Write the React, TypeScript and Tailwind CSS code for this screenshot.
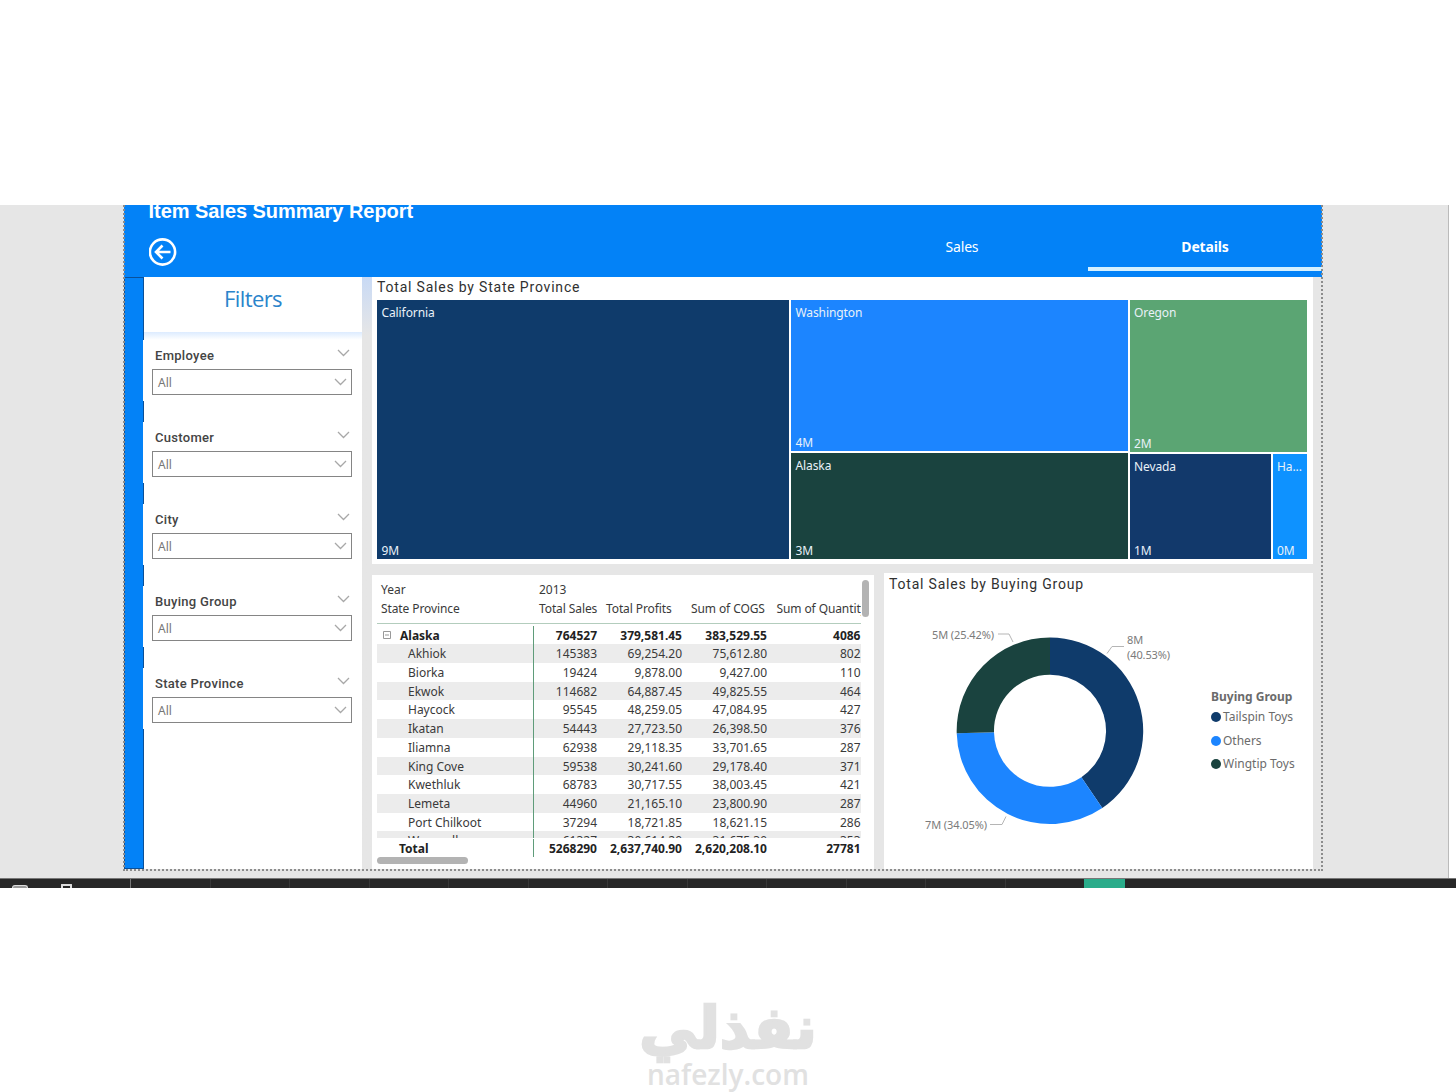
import React from 'react'

const slicers = ["Employee", "Customer", "City", "Buying Group", "State Province"]

const rows = [
  { name: "Akhiok", sales: "145383", profit: "69,254.20", cogs: "75,612.80", qty: "802" },
  { name: "Biorka", sales: "19424", profit: "9,878.00", cogs: "9,427.00", qty: "110" },
  { name: "Ekwok", sales: "114682", profit: "64,887.45", cogs: "49,825.55", qty: "464" },
  { name: "Haycock", sales: "95545", profit: "48,259.05", cogs: "47,084.95", qty: "427" },
  { name: "Ikatan", sales: "54443", profit: "27,723.50", cogs: "26,398.50", qty: "376" },
  { name: "Iliamna", sales: "62938", profit: "29,118.35", cogs: "33,701.65", qty: "287" },
  { name: "King Cove", sales: "59538", profit: "30,241.60", cogs: "29,178.40", qty: "371" },
  { name: "Kwethluk", sales: "68783", profit: "30,717.55", cogs: "38,003.45", qty: "421" },
  { name: "Lemeta", sales: "44960", profit: "21,165.10", cogs: "23,800.90", qty: "287" },
  { name: "Port Chilkoot", sales: "37294", profit: "18,721.85", cogs: "18,621.15", qty: "286" },
  { name: "Wrangell", sales: "61327", profit: "30,614.20", cogs: "31,675.30", qty: "353" },
]

const legend = [
  { name: "Tailspin Toys", dot: "bg-[#0f3b6b]" },
  { name: "Others", dot: "bg-[#1c85ff]" },
  { name: "Wingtip Toys", dot: "bg-[#1a433f]" },
]

function Chevron() {
  return (
    <svg width="13" height="8" viewBox="0 0 13 8" fill="none" stroke="#a8a8a8" strokeWidth="1.3">
      <path d="M1 1l5.5 5.5L12 1" />
    </svg>
  )
}

function Header() {
  return (
    <div className="flex h-[72px] shrink-0 justify-between overflow-hidden bg-[#0382f7] text-white">
      <div className="-mt-[7px] pl-[24.5px]">
        <h1 className="h-[26px] whitespace-nowrap font-['Liberation_Sans'] text-[20px] font-bold leading-[26px] tracking-[-0.04px]">Item Sales Summary Report</h1>
        <svg className="mt-[13px]" width="29" height="29" viewBox="0 0 29 29" fill="none" stroke="white" strokeWidth="2.6">
          <circle cx="13.5" cy="15" r="12.6" />
          <path d="M21.500 15H7M13.500 8.500L7 15l6.500 6.500" />
        </svg>
      </div>
      <div className="flex text-[14px] leading-[20px]">
        <div className="w-[252px] pt-[32px] text-center tracking-[-0.2px]">Sales</div>
        <div className="w-[234px] pt-[32px]">
          <div className="text-center font-bold tracking-[-0.15px]">Details</div>
          <div className="mt-[9.5px] h-[4.5px] bg-[#d6f1ff]"></div>
        </div>
      </div>
    </div>
  )
}

function Filters() {
  return (
    <div className="w-[218px] bg-white">
      <div className="h-[55px] pt-[6px] text-center font-['Open_Sans'] text-[22px] leading-[30px] tracking-[-0.6px] text-[#2a84cb]">Filters</div>
      <div className="h-[8px] bg-gradient-to-b from-[#dcebff] to-white"></div>
      {slicers.map((name) => (
        <div key={name} className="h-[82.1px]">
          <div className="-ml-px h-[61px] bg-white pl-[9px] pr-[10px]">
            <div className="flex h-[28.5px] justify-between pl-[3px] pr-[2px]">
              <div className="pt-[6.5px] font-['Roboto'] text-[13px] font-medium leading-[18px] tracking-[0.3px] text-[#444]">{name}</div>
              <div className="pt-[9px]"><Chevron /></div>
            </div>
            <div className="flex h-[26px] items-center justify-between border-[1.5px] border-[#858585] pl-[5px] pr-[4px] text-[12px] text-[#777]">
              <span className="pt-[2px]">All</span>
              <Chevron />
            </div>
          </div>
        </div>
      ))}
    </div>
  )
}

function Tile(props: any) {
  return (
    <div className={`flex flex-col justify-between overflow-hidden whitespace-nowrap pl-[4.500px] text-[12px] leading-[16px] text-[#e9f1f8] ${props.className}`}>
      <div className="pt-[5px] tracking-[-0.1px]">{props.name}</div>
      <div>{props.value}</div>
    </div>
  )
}

function Treemap() {
  return (
    <div className="h-[287px] bg-white pl-[5px]">
      <h3 className="h-[23px] font-['Roboto'] text-[14px] leading-[20px] tracking-[0.8px] text-[#303030]">Total Sales by State Province</h3>
      <div className="flex h-[259px] gap-[2px]">
        <Tile name="California" value="9M" className="w-[412px] bg-[#0f3b6b]" />
        <div className="flex w-[336.5px] flex-col gap-[2.5px]">
          <Tile name="Washington" value="4M" className="h-[150.5px] bg-[#1c85ff]" />
          <Tile name="Alaska" value="3M" className="h-[106px] bg-[#1a433f]" />
        </div>
        <div className="flex w-[177.5px] flex-col gap-[2px]">
          <Tile name="Oregon" value="2M" className="h-[152px] bg-[#5ba573]" />
          <div className="flex h-[105px] gap-[2px]">
            <Tile name="Nevada" value="1M" className="w-[141px] bg-[#12396b]" />
            <Tile name="Ha..." value="0M" className="w-[34.5px] bg-[#0e92ff]" />
          </div>
        </div>
      </div>
    </div>
  )
}

function Row(props: any) {
  return (
    <div className={`flex shrink-0 whitespace-nowrap leading-[19px] ${props.className}`}>
      <div className="w-[157px] border-r border-[#5f9c7a]">{props.children}</div>
      <div className="w-[63px] text-right">{props.sales}</div>
      <div className="w-[85px] text-right">{props.profit}</div>
      <div className="w-[85px] text-right">{props.cogs}</div>
      <div className="w-[93.5px] text-right">{props.qty}</div>
    </div>
  )
}

function Matrix() {
  return (
    <div className="relative w-[502px] bg-white pl-[5px] pt-[5px] text-[12px] text-[#3a3a3a]">
      <div className="w-[483.5px] overflow-hidden">
        <div className="flex h-[19px] pl-[4px] leading-[19px]">
          <div className="w-[158px]">Year</div>
          <div>2013</div>
        </div>
        <div className="flex h-[25px] whitespace-nowrap border-b border-[#b3cdbd] pl-[4px] leading-[19px] tracking-[-0.1px]">
          <div className="w-[158px] shrink-0">State Province</div>
          <div className="w-[67px] shrink-0">Total Sales</div>
          <div className="w-[85px] shrink-0">Total Profits</div>
          <div className="w-[85.5px] shrink-0">Sum of COGS</div>
          <div>Sum of Quantity</div>
        </div>
        <div className="flex h-[213.5px] flex-col overflow-hidden">
          <Row className="h-[20.3px] pt-[1.5px] font-bold text-[#222]" sales="764527" profit="379,581.45" cogs="383,529.55" qty="4086">
            <div className="flex items-center gap-[9px] pl-[6px]">
              <svg width="8" height="8" viewBox="0 0 8 8" fill="none" stroke="#999"><path d="M.5.5h7v7h-7zM2 4h4" /></svg>
              Alaska
            </div>
          </Row>
          {rows.map((val, index) => (
            <Row key={val.name} className={index % 2 == 0 ? "h-[18.72px] bg-[#ececec]" : "h-[18.72px]"} sales={val.sales} profit={val.profit} cogs={val.cogs} qty={val.qty}>
              <div className="pl-[31px]">{val.name}</div>
            </Row>
          ))}
        </div>
        <Row className="h-[19px] pt-px font-bold text-[#222]" sales="5268290" profit="2,637,740.90" cogs="2,620,208.10" qty="27781">
          <div className="pl-[22px]">Total</div>
        </Row>
      </div>
      <div className="h-[7px] w-[91px] rounded-full bg-[#b3b3b3]"></div>
      <div className="absolute right-[5px] top-[5px] h-[37px] w-[7px] rounded-full bg-[#b3b3b3]"></div>
    </div>
  )
}

function Donut() {
  return (
    <div className="w-[429px] bg-white">
      <h3 className="h-[20px] pl-[5px] pt-px font-['Roboto'] text-[14px] leading-[20px] tracking-[0.8px] text-[#303030]">Total Sales by Buying Group</h3>
      <div className="flex">
        <svg width="320" height="272" viewBox="884 593 320 272" fontSize="11" fill="#7b7b7b">
          <path fill="#0f3b6b" d="M1050 637.5A93.3 93.3 0 0 1 1102.3 808L1081.4 777.2A56 56 0 0 0 1050 674.8Z" />
          <path fill="#1c85ff" d="M1102.3 808A93.3 93.3 0 0 1 956.7 733.3L994 732.3A56 56 0 0 0 1081.4 777.2Z" />
          <path fill="#1a433f" d="M956.7 733.3A93.3 93.3 0 0 1 1050 637.5V674.8A56 56 0 0 0 994 732.3Z" />
          <g fill="none" stroke="#b5b5b5">
            <path d="M998 634h11l4 8M1124 646.500h-12l-5 7M990 824.500h12l4-8" />
          </g>
          <text x="932" y="639" letterSpacing="-0.1">5M (25.42%)</text>
          <text x="1127" y="643.500">8M</text>
          <text x="1127" y="658.500" letterSpacing="-0.1">(40.53%)</text>
          <text x="925" y="829" letterSpacing="-0.1">7M (34.05%)</text>
        </svg>
        <div className="pl-[7px] pt-[96px] text-[12px] text-[#6b6b6b]">
          <div className="h-[16px] font-bold leading-[16px]">Buying Group</div>
          {legend.map((item) => (
            <div key={item.name} className="flex h-[23.7px] items-center gap-[2px] whitespace-nowrap">
              <span className={`size-[10px] rounded-full ${item.dot}`}></span>
              {item.name}
            </div>
          ))}
        </div>
      </div>
    </div>
  )
}

function Taskbar() {
  return (
    <div className="flex h-[9.5px] items-end overflow-hidden border-t border-[#777] bg-[#272727]">
      <div className="flex h-full w-[131px] shrink-0 items-end border-r border-[#777]">
        <div className="ml-[12px] h-[3px] w-[16px] rounded-t-sm border border-b-0 border-[#ddd] bg-[#999]"></div>
        <div className="ml-[33px] h-[4px] w-[11px] rounded-t-[1px] border-2 border-b-0 border-[#ddd]"></div>
      </div>
      {[1, 2, 3, 4, 5, 6, 7, 8, 9, 10, 11].map((n) => (
        <div key={n} className="h-full w-[79.5px] shrink-0 border-r border-[#383838]"></div>
      ))}
      <div className="ml-[78.5px] h-full w-[41px] shrink-0 bg-[#2aac8a]"></div>
    </div>
  )
}

function App() {
  return (
    <div className="h-[1092px] w-[1456px] overflow-hidden bg-white pt-[205px] font-['Noto_Sans',sans-serif]">
      <div className="h-[673px] w-[1449px] border-r border-[#bbb] bg-[#e6e6e6] pl-[123px]">
        <div className="relative flex h-[666px] w-[1200px] flex-col pl-px pr-px">
          <Header />
          <div className="flex h-[592px]">
            <div className="w-[20px] border border-[#0a5099] bg-[#0382f7]"></div>
            <Filters />
            <div className="w-[10px] bg-gradient-to-b from-[#c9daf5] to-[#e6e6e6] to-10%"></div>
            <div className="w-[941px]">
              <Treemap />
              <div className="flex h-[305px] justify-between">
                <div className="flex pt-[11px]"><Matrix /></div>
                <div className="flex pt-[9px]"><Donut /></div>
              </div>
            </div>
          </div>
          <div className="pointer-events-none absolute inset-0 border-2 border-t-0 border-dotted border-[#8c8c8c]"></div>
        </div>
      </div>
      <Taskbar />
      <div className="flex flex-col items-center pt-[101px] text-[#e1e1e1]">
        <div className="h-[78px] font-['DejaVu_Sans'] text-[58px] font-bold leading-[78px] [-webkit-text-stroke:2.5px_#e1e1e1]" dir="rtl">نفذلي</div>
        <div className="-mt-[8px] font-['Open_Sans'] text-[28px] font-semibold leading-[30px]">nafezly.com</div>
      </div>
    </div>
  )
}

export default App
